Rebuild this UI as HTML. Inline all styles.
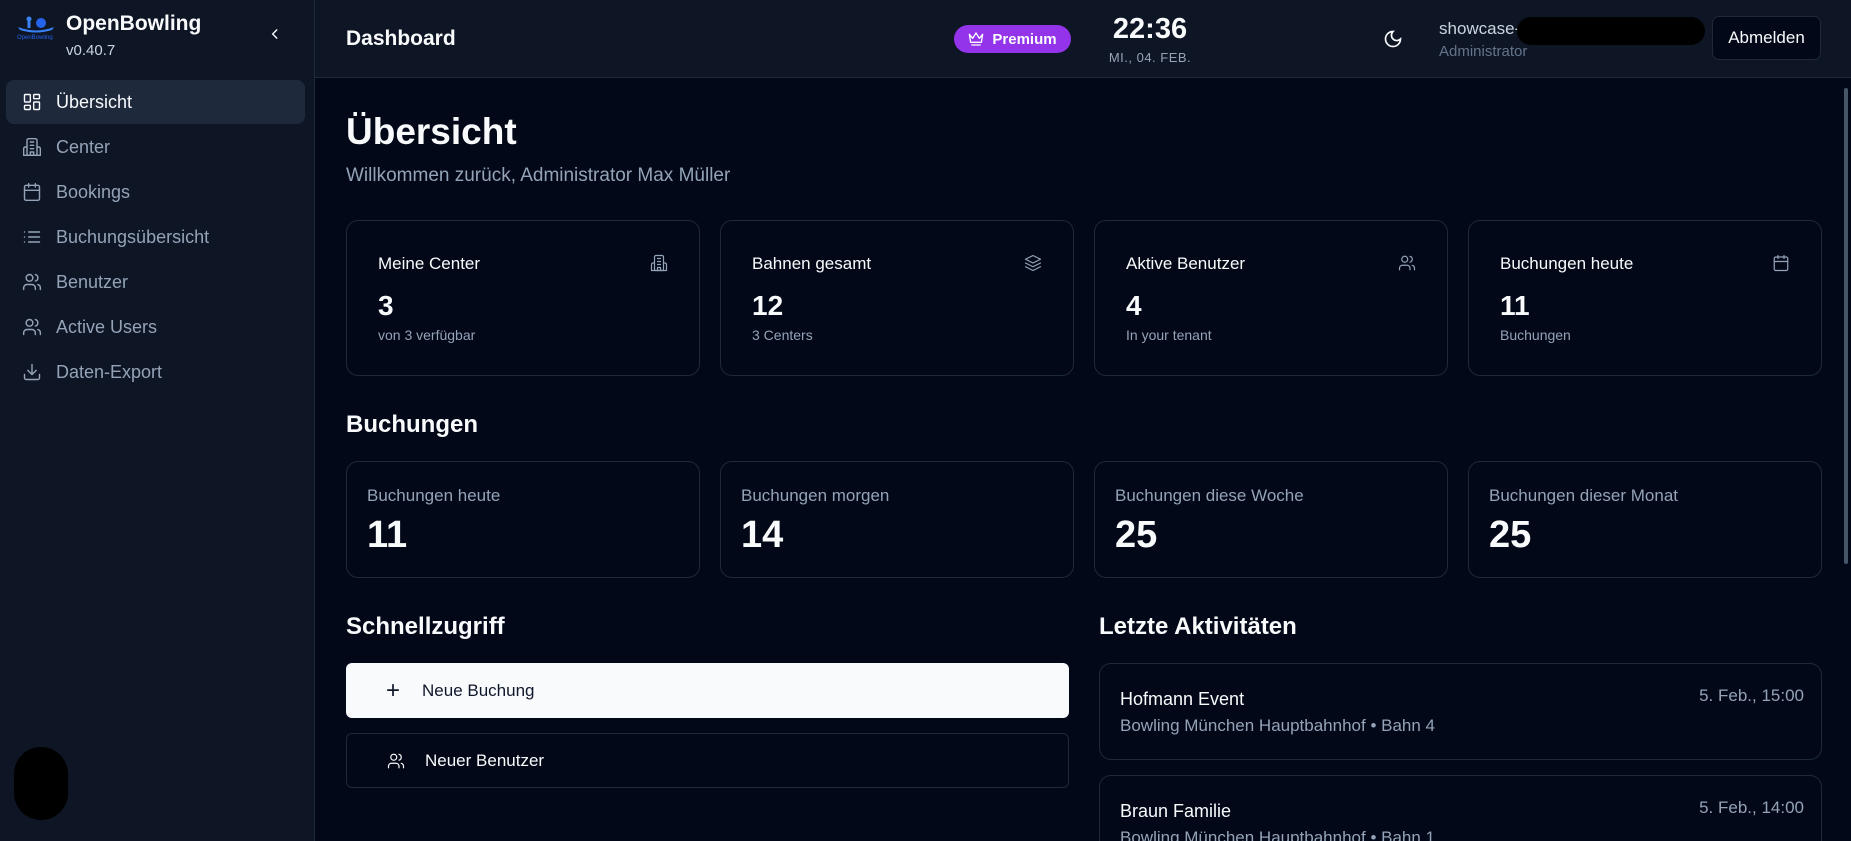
<!DOCTYPE html>
<html style="width:1851px;height:841px;overflow:hidden"><head><meta charset="utf-8"><style>
*{box-sizing:border-box;margin:0;padding:0}
html,body{width:1851px;height:841px;overflow:hidden}
body{background:#020817;font-family:"Liberation Sans",sans-serif;color:#f8fafc;position:relative}
.a{position:absolute}
.side{left:0;top:0;width:315px;height:841px;background:#0e1524;border-right:1px solid #1e293b}
.hdr{left:315px;top:0;width:1536px;height:78px;background:#0e1524;border-bottom:1px solid #1e293b}
.nav{left:6px;width:299px;height:44px;border-radius:8px;display:flex;align-items:center;padding-left:16px;font-size:18px;color:#94a3b8}
.nav svg{width:20px;height:20px;margin-right:14px;fill:none;stroke:#94a3b8;stroke-width:1.7;stroke-linecap:round;stroke-linejoin:round}
.nav.act{background:#1e293b;color:#f8fafc}
.nav.act svg{stroke:#f8fafc}
.card{border:1px solid #1e293b;border-radius:12px;background:#020817}
.ct{font-size:17px;color:#f8fafc}
.cn{font-size:28px;font-weight:bold}
.cs{font-size:14px;color:#94a3b8}
.ic{fill:none;stroke:#94a3b8;stroke-width:1.6;stroke-linecap:round;stroke-linejoin:round}
h2{font-size:24px;font-weight:bold}
</style></head><body>
<div class="a side"></div>
<div class="a hdr"></div>
<svg class="a" style="left:15px;top:12px" width="42" height="28" viewBox="0 0 42 28"><circle cx="14" cy="7" r="2.5" fill="#3b82f6"/><rect x="12.5" y="9" width="3" height="7" fill="#3b82f6"/><circle cx="26" cy="11" r="5" fill="#2563eb"/><path d="M3 15 Q21 22 39 15 L37 18 Q21 23 5 18Z" fill="#3b82f6"/><text x="2" y="27" font-size="6" fill="#2563eb" font-family="Liberation Sans">OpenBowling</text></svg>
<div class="a" style="left:66px;top:12px;font-size:21px;font-weight:bold">OpenBowling</div>
<div class="a" style="left:66px;top:42px;font-size:15px;color:#cbd5e1">v0.40.7</div>
<svg class="a" style="left:268px;top:27px" width="14" height="14" viewBox="0 0 24 24"><path d="M15 5l-7 7 7 7" fill="none" stroke="#f8fafc" stroke-width="2.4" stroke-linecap="round"/></svg>

<div class="a nav act" style="top:80px"><svg viewBox="0 0 24 24"><rect x="3" y="3" width="7" height="9" rx="1"/><rect x="14" y="3" width="7" height="5" rx="1"/><rect x="14" y="12" width="7" height="9" rx="1"/><rect x="3" y="16" width="7" height="5" rx="1"/></svg>Übersicht</div>
<div class="a nav" style="top:125px"><svg viewBox="0 0 24 24"><path d="M6 22V4a2 2 0 0 1 2-2h8a2 2 0 0 1 2 2v18Z"/><path d="M6 12H4a2 2 0 0 0-2 2v8h20v-8a2 2 0 0 0-2-2h-2M10 6h4M10 10h4M10 14h4M10 22v-4h4v4"/></svg>Center</div>
<div class="a nav" style="top:170px"><svg viewBox="0 0 24 24"><rect x="3" y="4" width="18" height="18" rx="2"/><path d="M16 2v4M8 2v4M3 10h18"/></svg>Bookings</div>
<div class="a nav" style="top:215px"><svg viewBox="0 0 24 24"><path d="M8 6h13M8 12h13M8 18h13M3 6h.01M3 12h.01M3 18h.01"/></svg>Buchungsübersicht</div>
<div class="a nav" style="top:260px"><svg viewBox="0 0 24 24"><path d="M16 21v-2a4 4 0 0 0-4-4H6a4 4 0 0 0-4 4v2"/><circle cx="9" cy="7" r="4"/><path d="M22 21v-2a4 4 0 0 0-3-3.87M16 3.13a4 4 0 0 1 0 7.75"/></svg>Benutzer</div>
<div class="a nav" style="top:305px"><svg viewBox="0 0 24 24"><path d="M16 21v-2a4 4 0 0 0-4-4H6a4 4 0 0 0-4 4v2"/><circle cx="9" cy="7" r="4"/><path d="M22 21v-2a4 4 0 0 0-3-3.87M16 3.13a4 4 0 0 1 0 7.75"/></svg>Active Users</div>
<div class="a nav" style="top:350px"><svg viewBox="0 0 24 24"><path d="M21 15v4a2 2 0 0 1-2 2H5a2 2 0 0 1-2-2v-4M7 10l5 5 5-5M12 15V3"/></svg>Daten-Export</div>
<div class="a" style="left:14px;top:747px;width:54px;height:73px;border-radius:27px;background:#000"></div>

<div class="a" style="left:346px;top:27px;font-size:21px;font-weight:bold">Dashboard</div>
<div class="a" style="left:954px;top:25px;width:117px;height:28px;border-radius:14px;background:#9333ea;display:flex;align-items:center;justify-content:center;font-size:15px;font-weight:bold">
<svg width="16" height="16" viewBox="0 0 24 24" style="margin-right:8px"><path d="M2 5l5 6 5-8 5 8 5-6-2 12H4Z M5 21h14" fill="none" stroke="#fff" stroke-width="2" stroke-linejoin="round"/></svg>Premium</div>
<div class="a" style="left:1090px;top:13px;width:120px;text-align:center;font-size:29px;font-weight:bold">22:36</div>
<div class="a" style="left:1090px;top:50px;width:120px;text-align:center;font-size:13px;color:#94a3b8;letter-spacing:.5px">MI., 04. FEB.</div>
<svg class="a" style="left:1383px;top:29px" width="20" height="20" viewBox="0 0 24 24"><path d="M12 3a6 6 0 0 0 9 9 9 9 0 1 1-9-9Z" fill="none" stroke="#f8fafc" stroke-width="2"/></svg>
<div class="a" style="left:1439px;top:19px;font-size:17px;color:#cbd5e1">showcase-</div>
<div class="a" style="left:1517px;top:17px;width:188px;height:28px;border-radius:14px;background:#000"></div>
<div class="a" style="left:1439px;top:43px;font-size:15px;color:#64748b">Administrator</div>
<div class="a" style="left:1712px;top:16px;width:109px;height:44px;border:1px solid #1e293b;border-radius:7px;background:#020817;display:flex;align-items:center;justify-content:center;font-size:17px">Abmelden</div>
<div class="a" style="left:1844px;top:88px;width:4px;height:476px;background:#475569;border-radius:2px"></div>

<div class="a" style="left:346px;top:111px;font-size:37px;font-weight:bold">Übersicht</div>
<div class="a" style="left:346px;top:165px;font-size:19px;color:#94a3b8">Willkommen zurück, Administrator Max Müller</div>

<div class="a card" style="left:346px;top:220px;width:354px;height:156px"></div>
<div class="a card" style="left:720px;top:220px;width:354px;height:156px"></div>
<div class="a card" style="left:1094px;top:220px;width:354px;height:156px"></div>
<div class="a card" style="left:1468px;top:220px;width:354px;height:156px"></div>
<div class="a ct" style="left:378px;top:254px">Meine Center</div>
<div class="a cn" style="left:378px;top:290px">3</div>
<div class="a cs" style="left:378px;top:327px">von 3 verfügbar</div>
<svg class="a ic" style="left:650px;top:254px" width="18" height="18" viewBox="0 0 24 24"><path d="M6 22V4a2 2 0 0 1 2-2h8a2 2 0 0 1 2 2v18Z"/><path d="M6 12H4a2 2 0 0 0-2 2v8h20v-8a2 2 0 0 0-2-2h-2M10 6h4M10 10h4M10 14h4M10 22v-4h4v4"/></svg>
<div class="a ct" style="left:752px;top:254px">Bahnen gesamt</div>
<div class="a cn" style="left:752px;top:290px">12</div>
<div class="a cs" style="left:752px;top:327px">3 Centers</div>
<svg class="a ic" style="left:1024px;top:254px" width="18" height="18" viewBox="0 0 24 24"><path d="M12 2 2 7l10 5 10-5Z M2 12l10 5 10-5 M2 17l10 5 10-5"/></svg>
<div class="a ct" style="left:1126px;top:254px">Aktive Benutzer</div>
<div class="a cn" style="left:1126px;top:290px">4</div>
<div class="a cs" style="left:1126px;top:327px">In your tenant</div>
<svg class="a ic" style="left:1398px;top:254px" width="18" height="18" viewBox="0 0 24 24"><path d="M16 21v-2a4 4 0 0 0-4-4H6a4 4 0 0 0-4 4v2"/><circle cx="9" cy="7" r="4"/><path d="M22 21v-2a4 4 0 0 0-3-3.87M16 3.13a4 4 0 0 1 0 7.75"/></svg>
<div class="a ct" style="left:1500px;top:254px">Buchungen heute</div>
<div class="a cn" style="left:1500px;top:290px">11</div>
<div class="a cs" style="left:1500px;top:327px">Buchungen</div>
<svg class="a ic" style="left:1772px;top:254px" width="18" height="18" viewBox="0 0 24 24"><rect x="3" y="4" width="18" height="18" rx="2"/><path d="M16 2v4M8 2v4M3 10h18"/></svg>

<h2 class="a" style="left:346px;top:411px">Buchungen</h2>
<div class="a card" style="left:346px;top:461px;width:354px;height:117px"></div>
<div class="a card" style="left:720px;top:461px;width:354px;height:117px"></div>
<div class="a card" style="left:1094px;top:461px;width:354px;height:117px"></div>
<div class="a card" style="left:1468px;top:461px;width:354px;height:117px"></div>
<div class="a" style="left:367px;top:486px;font-size:17px;color:#94a3b8">Buchungen heute</div>
<div class="a" style="left:741px;top:486px;font-size:17px;color:#94a3b8">Buchungen morgen</div>
<div class="a" style="left:1115px;top:486px;font-size:17px;color:#94a3b8">Buchungen diese Woche</div>
<div class="a" style="left:1489px;top:486px;font-size:17px;color:#94a3b8">Buchungen dieser Monat</div>
<div class="a" style="left:367px;top:514px;font-size:38px;font-weight:bold">11</div>
<div class="a" style="left:741px;top:514px;font-size:38px;font-weight:bold">14</div>
<div class="a" style="left:1115px;top:514px;font-size:38px;font-weight:bold">25</div>
<div class="a" style="left:1489px;top:514px;font-size:38px;font-weight:bold">25</div>

<h2 class="a" style="left:346px;top:613px">Schnellzugriff</h2>
<h2 class="a" style="left:1099px;top:613px">Letzte Aktivitäten</h2>
<div class="a" style="left:346px;top:663px;width:723px;height:55px;border-radius:6px;background:#f8fafc;color:#0f172a;display:flex;align-items:center;padding-left:40px;font-size:17px"><span style="font-size:24px;margin-right:22px;font-weight:300">+</span>Neue Buchung</div>
<div class="a" style="left:346px;top:733px;width:723px;height:55px;border-radius:6px;border:1px solid #1e293b;display:flex;align-items:center;padding-left:40px;font-size:17px"><svg class="ic" style="stroke:#f8fafc;margin-right:20px" width="18" height="18" viewBox="0 0 24 24"><path d="M16 21v-2a4 4 0 0 0-4-4H6a4 4 0 0 0-4 4v2"/><circle cx="9" cy="7" r="4"/><path d="M22 21v-2a4 4 0 0 0-3-3.87M16 3.13a4 4 0 0 1 0 7.75"/></svg>Neuer Benutzer</div>

<div class="a card" style="left:1099px;top:663px;width:723px;height:97px"></div>
<div class="a" style="left:1120px;top:689px;font-size:18px">Hofmann Event</div>
<div class="a" style="left:1120px;top:716px;font-size:17px;color:#94a3b8">Bowling München Hauptbahnhof • Bahn 4</div>
<div class="a" style="left:1600px;top:686px;width:204px;text-align:right;font-size:17px;color:#94a3b8">5. Feb., 15:00</div>
<div class="a" style="left:1099px;top:775px;width:723px;height:66px;overflow:hidden">
<div class="a card" style="left:0;top:0;width:723px;height:97px"></div>
<div class="a" style="left:21px;top:26px;font-size:18px">Braun Familie</div>
<div class="a" style="left:21px;top:53px;font-size:17px;color:#94a3b8">Bowling München Hauptbahnhof • Bahn 1</div>
<div class="a" style="left:501px;top:23px;width:204px;text-align:right;font-size:17px;color:#94a3b8">5. Feb., 14:00</div>
</div>
</body></html>
